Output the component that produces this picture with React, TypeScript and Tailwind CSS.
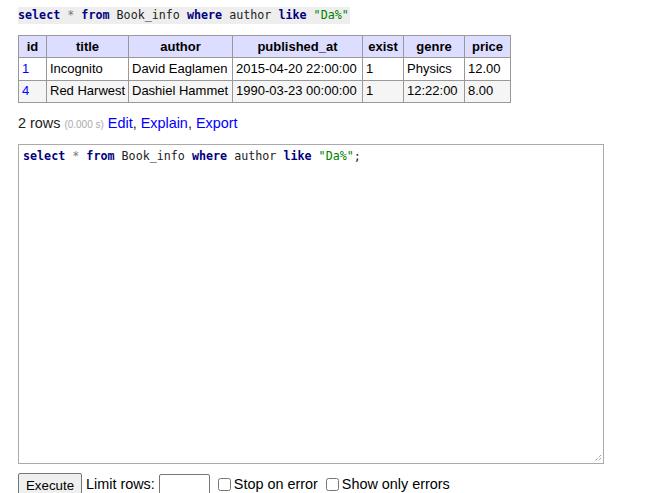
import React from "react";

const mono = { fontFamily: '"DejaVu Sans Mono", monospace' };

function Sql({ semi }: { semi?: boolean }) {
  return (
    <>
      <span className="font-bold text-[#000080]">select</span>
      <span className="text-[#777]"> * </span>
      <span className="font-bold text-[#000080]">from</span>
      <span className="text-[#222]"> Book_info </span>
      <span className="font-bold text-[#000080]">where</span>
      <span className="text-[#222]"> author </span>
      <span className="font-bold text-[#000080]">like</span>
      <span className="text-[#222]"> </span>
      <span className="text-[#008000]">"Da%"</span>
      {semi && <span className="text-[#222]">;</span>}
    </>
  );
}

export default function App() {
  const th = "border border-[#999] bg-[#ddf] px-0 py-[2.6px] text-center font-bold";
  const td = "border border-[#999] pl-[3px] pr-0 py-[2.6px] text-left whitespace-nowrap overflow-hidden";
  const rows = [
    ["1", "Incognito", "David Eaglamen", "2015-04-20 22:00:00", "1", "Physics", "12.00"],
    ["4", "Red Harwest", "Dashiel Hammet", "1990-03-23 00:00:00", "1", "12:22:00", "8.00"],
  ];
  return (
    <div
      className="w-[650px] h-[493px] overflow-hidden bg-white text-black pl-[18px]"
      style={{ fontFamily: '"Liberation Sans", Arial, sans-serif' }}
    >
      <div className="pt-[2px] h-[35px]">
        <code className="inline-block bg-[#eee] text-[11.7px] leading-[17px] pr-[1px]" style={mono}>
          <Sql />
        </code>
      </div>
      <table className="border-collapse table-fixed w-[493px] text-[13px] leading-[16.25px]">
        <thead>
          <tr>
            <th className={th + " w-[28px]"}>id</th>
            <th className={th + " w-[82px]"}>title</th>
            <th className={th + " w-[104px]"}>author</th>
            <th className={th + " w-[130px]"}>published_at</th>
            <th className={th + " w-[41px]"}>exist</th>
            <th className={th + " w-[61px]"}>genre</th>
            <th className={th + " w-[46px]"}>price</th>
          </tr>
        </thead>
        <tbody>
          {rows.map((r, i) => (
            <tr key={i} className={i % 2 === 1 ? "bg-[#f5f5f5]" : "bg-white"}>
              <td className={td}>
                <a className="text-[#00f]">{r[0]}</a>
              </td>
              {r.slice(1).map((c, j) => (
                <td key={j} className={td}>
                  {c}
                </td>
              ))}
            </tr>
          ))}
        </tbody>
      </table>
      <p className="mt-[11px] text-[14.4px] leading-[18px] text-[#222]">
        2 rows <span className="text-[10px] text-[#aaa]">(0.000 s)</span>{" "}
        <a className="text-[#00f]">Edit</a>, <a className="text-[#00f]">Explain</a>,{" "}
        <a className="text-[#00f]">Export</a>
      </p>
      <div className="mt-[10px] w-[586px] h-[320px] border border-[#aaa] relative px-[4px] pt-[4px]">
        <div className="text-[11.7px] leading-[15px] whitespace-pre" style={mono}>
          <Sql semi />
        </div>
        <svg className="absolute right-[1px] bottom-[1px]" width="9" height="9" viewBox="0 0 9 9">
          <path d="M8 2 L2 8 M8 5 L5 8" stroke="#777" strokeWidth="1" strokeDasharray="1 1" />
        </svg>
      </div>
      <div className="mt-[9px] flex items-center text-[14.4px] leading-[18px]">
        <button className="h-[22px] px-[7px] border border-[#767676] rounded-[2px] bg-[#efefef] text-[13.3px] leading-[16px] pt-[3px]">
          Execute
        </button>
        <span className="ml-[4px]">Limit rows:</span>
        <input className="ml-[4px] w-[51px] h-[21px] border border-[#767676] rounded-[2px] bg-white" />
        <input type="checkbox" className="ml-[8px] w-[13px] h-[13px] mr-[3px]" />
        <span>Stop on error</span>
        <input type="checkbox" className="ml-[8px] w-[13px] h-[13px] mr-[3px]" />
        <span>Show only errors</span>
      </div>
    </div>
  );
}
